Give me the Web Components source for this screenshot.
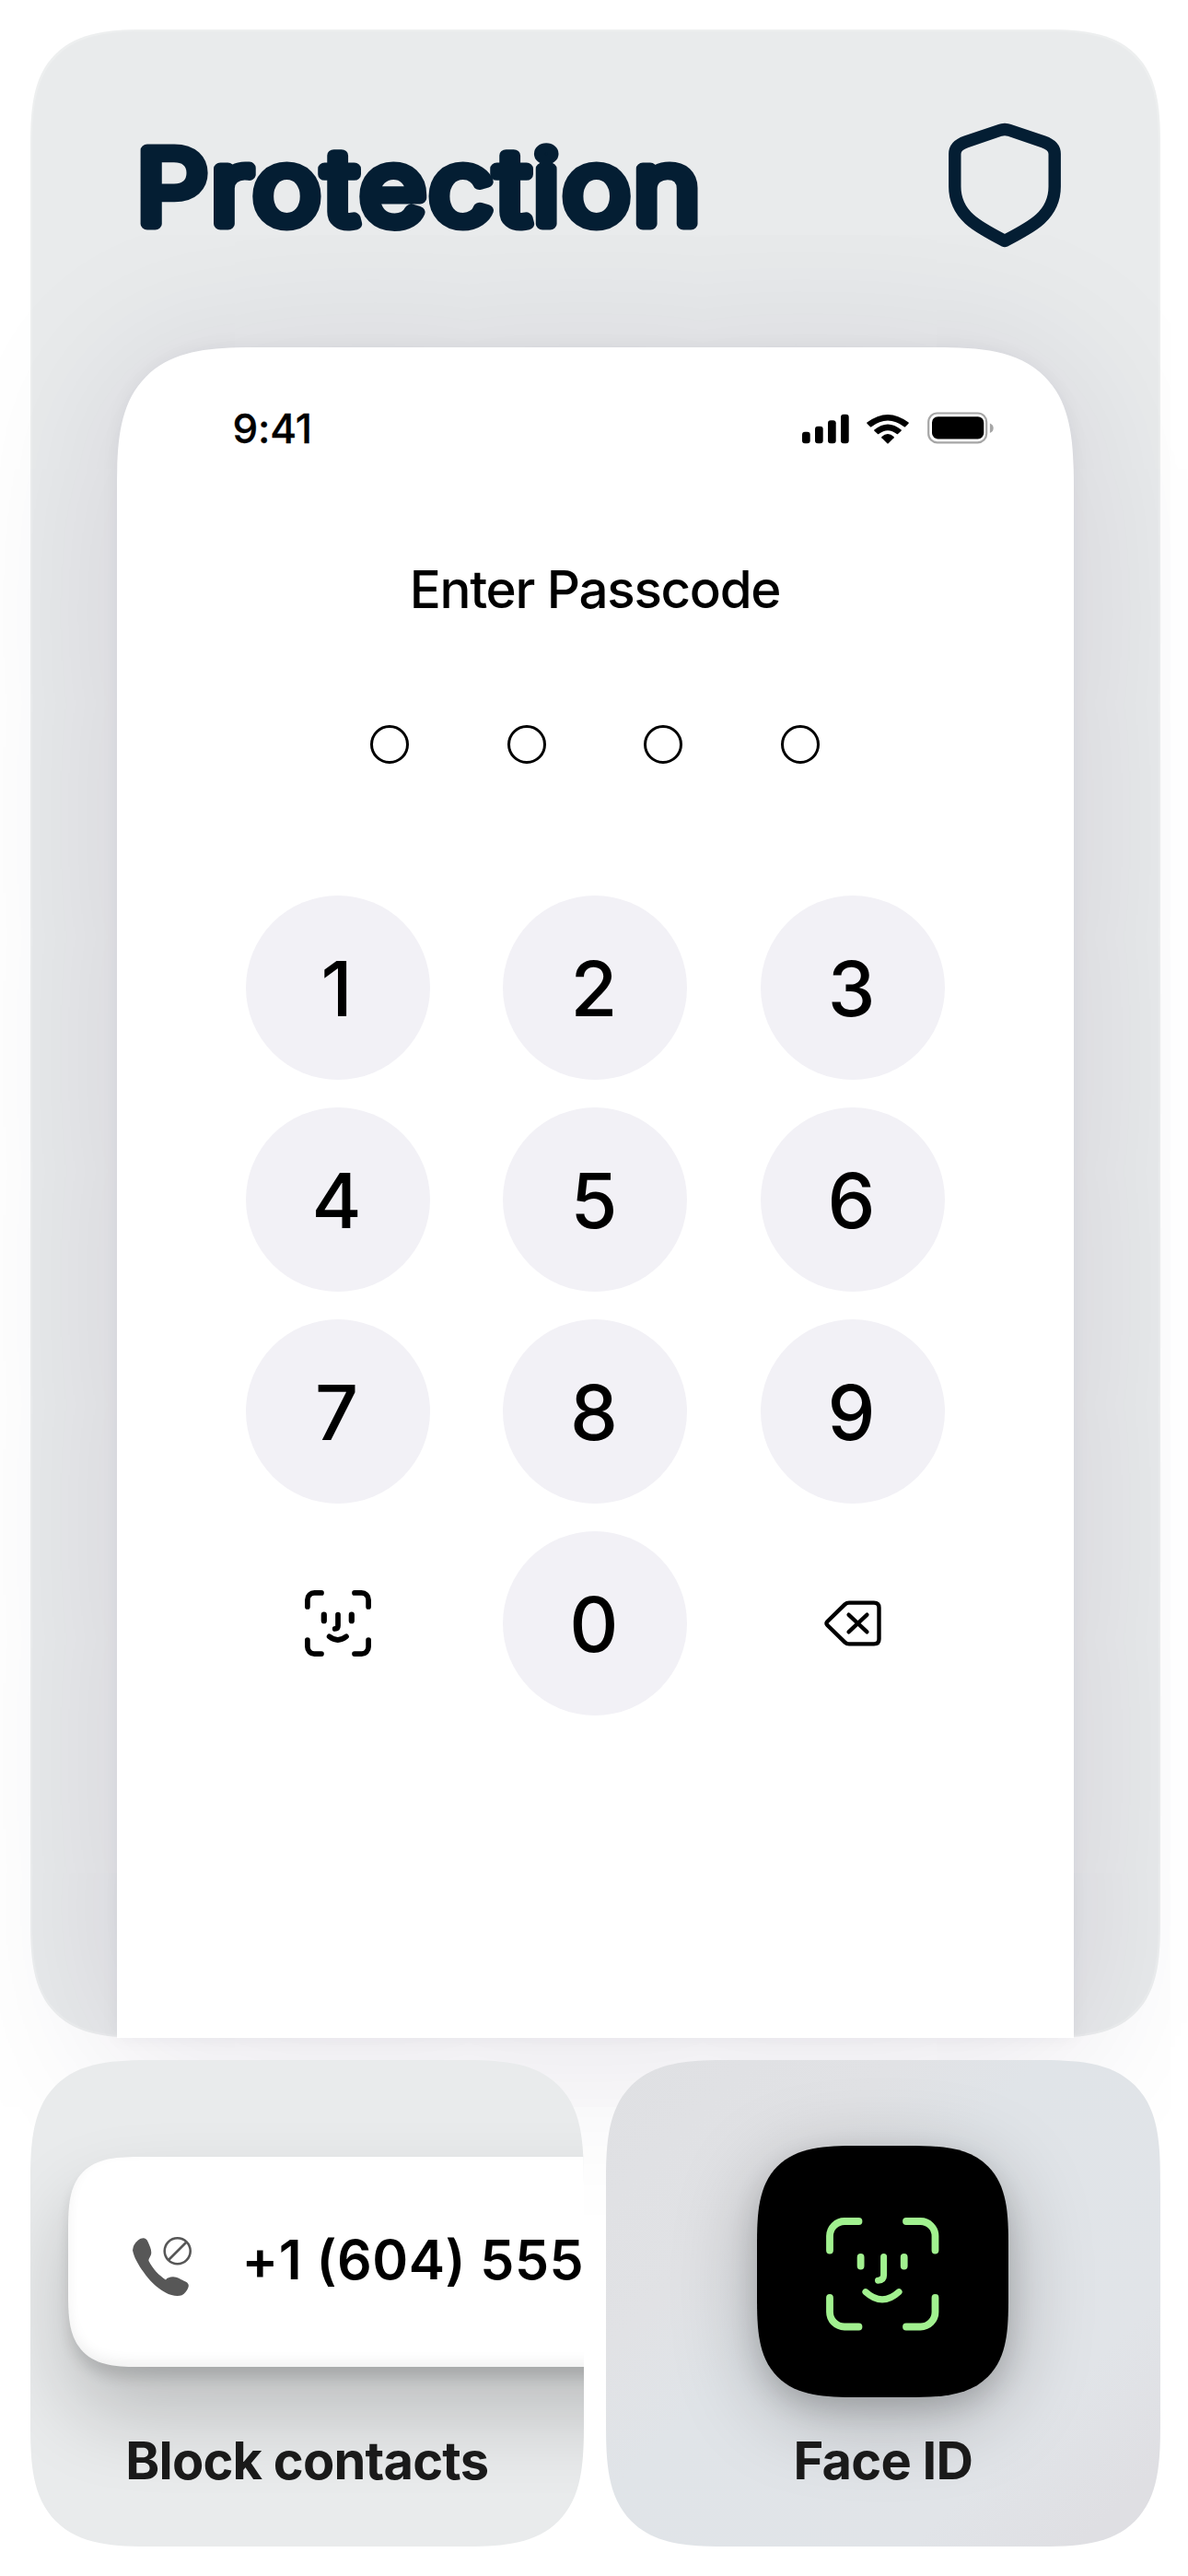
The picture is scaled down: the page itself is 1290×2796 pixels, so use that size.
<!DOCTYPE html>
<html lang="en">
<head>
<meta charset="UTF-8">
<title>Protection</title>
<style>
    body {
        margin: 0;
        background: #fff;
        font-family: Inter, "Liberation Sans", sans-serif;
    }
</style>
</head>
<body>
<protection-page></protection-page>

<script>
// Face ID glyph, the small one is used on the keypad and the large one on the tile
const FACE_SMALL = `
    <svg width="72" height="72" viewBox="0 0 72 72" fill="none" stroke="#000" stroke-width="5.7" stroke-linecap="round">
        <path d="M2.9 18V10.4A7.5 7.5 0 0 1 10.4 2.9H18M54 2.9H61.6A7.5 7.5 0 0 1 69.1 10.4V18M69.1 54V61.6A7.5 7.5 0 0 1 61.6 69.1H54M18 69.1H10.4A7.5 7.5 0 0 1 2.9 61.6V54"/>
        <path d="M20.8 26.7V33.2M50.8 26.7V33.2" stroke-width="6.2"/>
        <path d="M36 26.7V38.5Q36 41.9 32.7 41.9M26.6 50.3Q35.8 57.6 45 50.3"/>
    </svg>`;

const FACE_LARGE = `
    <svg width="123" height="123" viewBox="0 0 123 123" fill="none" stroke="#a1f18f" stroke-width="7.8" stroke-linecap="round">
        <path d="M4 35.5V20A16 16 0 0 1 20 4H35.5M87 4H102.5A16 16 0 0 1 118.5 20V35.5M118.5 87V102.5A16 16 0 0 1 102.5 118.5H87M35.5 118.5H20A16 16 0 0 1 4 102.5V87"/>
        <path d="M37.6 43V52.5M84.7 43V52.5"/>
        <path d="M62.6 42.6V62.5Q62.6 68 56.5 68.2M42.9 80.6Q61 97.2 79.1 80.6" stroke-width="7"/>
    </svg>`;

class ShieldIcon extends HTMLElement {
    constructor() {
        super();
        this.attachShadow({ mode: 'open' }).innerHTML = `
            <style>
            :host { display: block; width: 122px; height: 136px; }
            svg { display: block; }
            </style>
            <svg width="122" height="136" viewBox="0 0 122 136" fill="none" stroke="#041e33" stroke-width="13.4" stroke-linejoin="round">
                <path d="M55.5 8.5Q61 6.4 66.5 8.5L103 20.8Q115.2 25 115.2 34V69.5C115.2 101 90 113.5 61 128.5C32 113.5 6.8 101 6.8 69.5V34Q6.8 25 19 20.8Z"/>
            </svg>
        `;
    }
}

class StatusBar extends HTMLElement {
    constructor() {
        super();
        this.attachShadow({ mode: 'open' }).innerHTML = `
            <style>
            :host {
                display: flex;
                justify-content: space-between;
                align-items: center;
                height: 54px;
                padding: 0 87px 0 126px;
            }
            .time {
                font-size: 44px;
                font-weight: 500;
                letter-spacing: -0.2px;
                line-height: 54px;
                -webkit-text-stroke: 0.3px #000;
            }
            svg { display: block; }
            </style>
            <span class="time"><slot></slot></span>
            <svg width="208" height="36" viewBox="871 448 208 36">
                <g>
                    <rect x="871" y="469.7" width="8.7" height="12.6" rx="3"/>
                    <rect x="885" y="463.7" width="8.7" height="18.6" rx="3"/>
                    <rect x="899" y="457.2" width="8.7" height="25.1" rx="3"/>
                    <rect x="913" y="450.8" width="8.7" height="31.5" rx="3"/>
                </g>
                <g>
                    <path d="M941.4 459.6Q964 442.2 986.6 459.6Q987 460.2 986.5 460.8L983 464.2Q982.4 464.6 981.8 464.2Q964 450.8 946.2 464.2Q945.6 464.6 945 464.2L941.5 460.8Q941 460.2 941.4 459.6Z"/>
                    <path d="M949.3 467.5Q964 455.5 978.7 467.5Q979.1 468.1 978.6 468.7L975 472Q974.4 472.4 973.8 472Q964 464.3 954.2 472Q953.6 472.4 953 472L949.4 468.7Q948.9 468.1 949.3 467.5Z"/>
                    <path d="M957.4 475Q964 468.8 970.6 475Q971 475.6 970.6 476.2L964.6 482.2Q964 482.8 963.4 482.2L957.4 476.2Q957 475.6 957.4 475Z"/>
                </g>
                <rect x="1008.2" y="449.5" width="63" height="31.8" rx="9.5" fill="none" stroke="#a6a6a6" stroke-width="2.2"/>
                <rect x="1012" y="453.2" width="56.3" height="24.3" rx="6.5"/>
                <path d="M1074.9 460.5Q1078.7 462 1078.7 465.7T1074.9 471Z" fill="#a6a6a6"/>
            </svg>
        `;
    }
}

class PasscodeDots extends HTMLElement {
    constructor() {
        super();
        this.attachShadow({ mode: 'open' }).innerHTML = `
            <style>
            :host { display: flex; justify-content: center; gap: 106.7px; }
            i {
                box-sizing: border-box;
                width: 42px;
                height: 42px;
                border: 3px solid #000;
                border-radius: 50%;
            }
            </style>
            <i></i><i></i><i></i><i></i>
        `;
    }
}

class KeypadKey extends HTMLElement {
    constructor() {
        super();
        this.attachShadow({ mode: 'open' }).innerHTML = `
            <style>
            :host {
                display: flex;
                align-items: center;
                justify-content: center;
                box-sizing: border-box;
                width: 200px;
                height: 200px;
                border-radius: 50%;
                background: #f2f1f6;
                font-size: 82.5px;
                font-weight: 500;
                line-height: 100px;
            }
            :host(:not([plain])) { padding: 2px 2px 0 0; }
            :host([plain]) { background: none; }
            ::slotted(svg) { display: block; }
            </style>
            <slot></slot>
        `;
    }
}

class PhoneScreen extends HTMLElement {
    constructor() {
        super();
        this.attachShadow({ mode: 'open' }).innerHTML = `
            <style>
            :host {
                display: block;
                box-sizing: border-box;
                height: 1835px;
                padding-top: 61px;
                background: #fff;
                border-radius: 155px 155px 0 0;
                corner-shape: superellipse(1.6) superellipse(1.6) round round;
                box-shadow: 0 0 20px rgba(30, 0, 60, 0.05), 0 20px 190px rgba(30, 10, 60, 0.13);
            }
            h2 {
                margin: 113px 0 0;
                font-size: 56.5px;
                font-weight: 500;
                line-height: 70px;
                letter-spacing: -1.3px;
                text-align: center;
            }
            passcode-dots { margin-top: 112px; }
            .keys {
                display: grid;
                grid-template-columns: repeat(3, 200px);
                justify-content: center;
                column-gap: 79.5px;
                row-gap: 30px;
                margin-top: 143px;
            }
            </style>
            <status-bar>9:41</status-bar>
            <h2>Enter Passcode</h2>
            <passcode-dots></passcode-dots>
            <div class="keys">
                ${[1, 2, 3, 4, 5, 6, 7, 8, 9].map(n => `<keypad-key>${n}</keypad-key>`).join('')}
                <keypad-key plain>${FACE_SMALL}</keypad-key>
                <keypad-key>0</keypad-key>
                <keypad-key plain>
                    <svg width="62" height="50" viewBox="0 0 62 50" fill="none" stroke="#000" stroke-width="4.4" stroke-linecap="round" stroke-linejoin="round">
                        <path d="M3.4 23L22.5 4.4Q24.4 2.6 27 2.6H54Q59.5 2.6 59.5 8V42Q59.5 47.4 54 47.4H27Q24.4 47.4 22.5 45.6L3.4 27Q1.4 25 3.4 23Z"/>
                        <path d="M26.5 15.6L46.5 34.4M46.5 15.6L26.5 34.4" stroke-width="4.2"/>
                    </svg>
                </keypad-key>
            </div>
        `;
    }
}

class HeroCard extends HTMLElement {
    constructor() {
        super();
        this.attachShadow({ mode: 'open' }).innerHTML = `
            <style>
            :host {
                display: block;
                box-sizing: border-box;
                height: 2180px;
                padding: 0 94px;
                background: #e9ebec;
                border-radius: 132px;
                corner-shape: superellipse(1.6);
                box-shadow: inset 0 0 0 2px rgba(255, 255, 255, 0.2);
            }
            header {
                display: flex;
                justify-content: space-between;
                height: 345px;
            }
            header svg { display: block; margin: 93px 0 0 15px; overflow: visible; }
            /* the round joined outline softens the letter corners */
            text {
                font-size: 110px;
                font-weight: 300;
                letter-spacing: 3px;
                fill: #041e33;
                stroke: #041e33;
                stroke-width: 13px;
                stroke-linejoin: round;
            }
            shield-icon { margin: 101px 14px 0 0; }
            </style>
            <header>
                <svg width="640" height="150" viewBox="0 0 640 150">
                    <text x="6" y="118" textLength="616" lengthAdjust="spacingAndGlyphs">Protection</text>
                </svg>
                <shield-icon></shield-icon>
            </header>
            <phone-screen></phone-screen>
        `;
    }
}

class FeatureCard extends HTMLElement {
    constructor() {
        super();
        this.attachShadow({ mode: 'open' }).innerHTML = `
            <style>
            :host {
                display: flex;
                flex-direction: column;
                box-sizing: border-box;
                height: 528px;
                overflow: hidden;
                background: var(--card-fill, #e9ebec);
                border-radius: 135px;
                corner-shape: superellipse(1.6);
            }
            .art { display: flex; height: 400px; }
            p {
                margin: 0;
                font-size: 56px;
                font-weight: 700;
                line-height: 70px;
                letter-spacing: -0.8px;
                color: #1a1a1a;
                text-align: center;
            }
            </style>
            <div class="art"><slot></slot></div>
            <p><slot name="label"></slot></p>
        `;
    }
}

class BlockedNumber extends HTMLElement {
    constructor() {
        super();
        this.attachShadow({ mode: 'open' }).innerHTML = `
            <style>
            :host {
                display: flex;
                flex: none;
                align-items: center;
                box-sizing: border-box;
                width: 800px;
                height: 228px;
                margin: 105px 0 0 41px;
                padding-left: 70px;
                background: #fff;
                border-radius: 80px;
                corner-shape: superellipse(1.6);
                box-shadow: 0 12px 14px rgba(0, 0, 0, 0.12), 0 50px 90px rgba(0, 0, 0, 0.2),
                    inset 0 -6px 14px rgba(0, 0, 0, 0.06);
            }
            svg { display: block; margin: 10px 0 0 0; }
            span {
                margin: -4px 0 0 54px;
                font-size: 59px;
                font-weight: 600;
                line-height: 72px;
                letter-spacing: 0.5px;
                white-space: nowrap;
            }
            </style>
            <svg width="65" height="66" viewBox="0 0 65 66" fill="none">
                <path fill="#575757" d="M0 15.5Q0.5 9 6 4.5C10 1.5 14.5 1 16.5 6C18.5 10.5 20.3 14 20.3 18C20.3 22 17 24 17.5 27C22 36 29 43 36 47.4Q38 44.5 44 44.3C48 44.3 53 47.5 57.5 49.5Q61.5 51.5 60.7 55C59.5 59 56.5 62.5 53.5 64.3C49 66 42 65 35.5 61.3C25 55.5 18 48 12 39.3C6 31 1.5 23 0 15.5Z"/>
                <circle cx="48.7" cy="16.2" r="14" stroke="#575757" stroke-width="2.6"/>
                <path d="M39 26L58.5 6.5" stroke="#575757" stroke-width="2.6"/>
            </svg>
            <span><slot></slot></span>
        `;
    }
}

class FaceIdTile extends HTMLElement {
    constructor() {
        super();
        this.attachShadow({ mode: 'open' }).innerHTML = `
            <style>
            :host {
                display: flex;
                align-items: center;
                justify-content: center;
                width: 273px;
                height: 273px;
                margin: 93px auto 0;
                background: #000;
                border-radius: 109px;
                corner-shape: superellipse(1.6);
                box-shadow: 0 12px 30px rgba(0, 0, 0, 0.14), 0 20px 90px rgba(0, 0, 0, 0.26);
            }
            svg { display: block; margin: 5px 1px 0 0; }
            </style>
            ${FACE_LARGE}
        `;
    }
}

class ProtectionPage extends HTMLElement {
    constructor() {
        super();
        this.attachShadow({ mode: 'open' }).innerHTML = `
            <style>
            :host {
                display: grid;
                grid-template-columns: 601.5px 601.5px;
                gap: 24px;
                box-sizing: border-box;
                width: 1290px;
                height: 2796px;
                padding: 32px 30px 32px 32.5px;
                align-content: start;
                overflow: hidden;
            }
            hero-card { grid-column: 1 / -1; }
            feature-card { position: relative; }
            .face { --card-fill: linear-gradient(135deg, #dfe0e3 0%, #e1e2e5 28%, #e0e4e8 42%, #e1e4e8 76%, #dfdfe3 92%); }
            </style>
            <hero-card></hero-card>
            <feature-card>
                <blocked-number>+1 (604) 555</blocked-number>
                <span slot="label">Block contacts</span>
            </feature-card>
            <feature-card class="face">
                <face-id-tile></face-id-tile>
                <span slot="label">Face ID</span>
            </feature-card>
        `;
    }
}

customElements.define('shield-icon', ShieldIcon);
customElements.define('status-bar', StatusBar);
customElements.define('passcode-dots', PasscodeDots);
customElements.define('keypad-key', KeypadKey);
customElements.define('phone-screen', PhoneScreen);
customElements.define('hero-card', HeroCard);
customElements.define('feature-card', FeatureCard);
customElements.define('blocked-number', BlockedNumber);
customElements.define('face-id-tile', FaceIdTile);
customElements.define('protection-page', ProtectionPage);
</script>
</body>
</html>
